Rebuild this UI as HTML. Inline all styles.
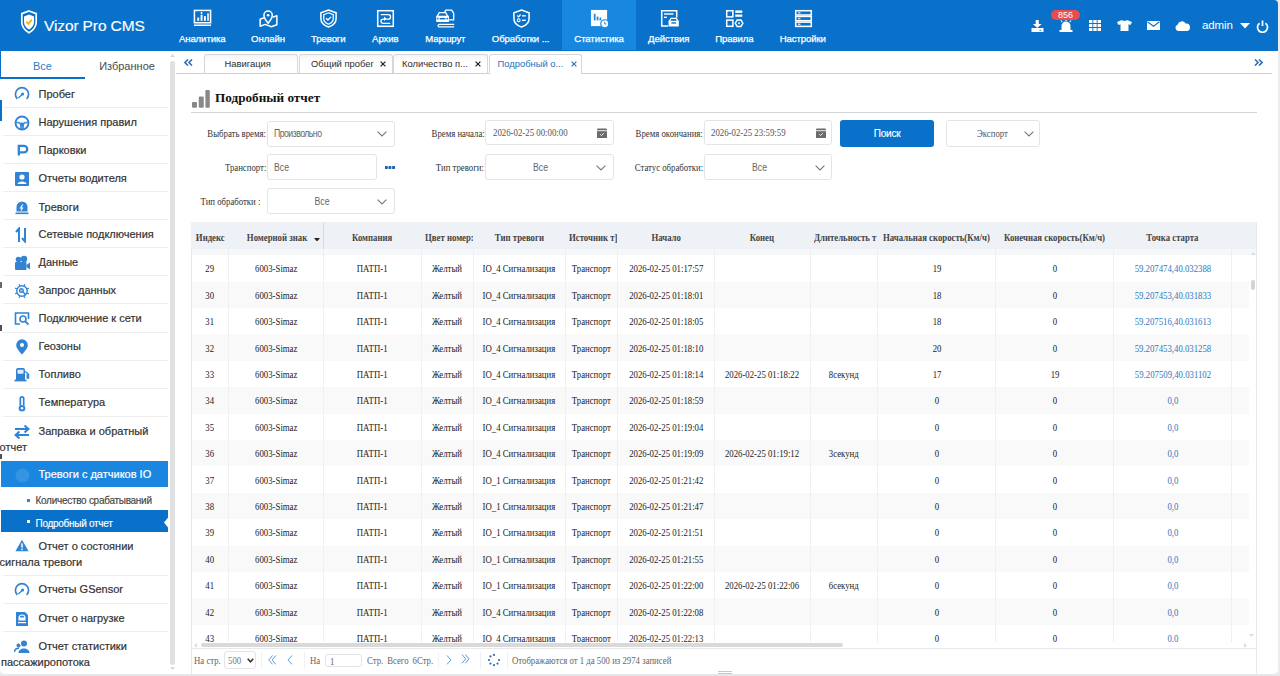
<!DOCTYPE html>
<html><head><meta charset="utf-8">
<style>
*{margin:0;padding:0;box-sizing:border-box}
html,body{width:1280px;height:676px;overflow:hidden;background:#ececec;font-family:"Liberation Sans",sans-serif}
.abs{position:absolute}
#hdr{position:absolute;left:0;top:0;width:1278px;height:51px;z-index:5;background:#0971ca;border-top-right-radius:4px}
.nav{position:absolute;top:0;height:50px;color:#fff;font-size:9.6px;letter-spacing:-0.1px;text-align:center;-webkit-text-stroke:0.25px #fff}
.nav .lbl{position:absolute;left:0;right:0;top:32.5px;line-height:12px;white-space:nowrap}
.nav svg{position:absolute;top:9px;left:50%;margin-left:-9px}
.nav.on{background:#1887e0}
#side{position:absolute;left:0;top:50px;width:169px;height:624px;background:#fff;overflow:hidden;border-bottom-left-radius:5px}
#sscroll{position:absolute;left:169px;top:50px;width:7px;height:624px;background:#fff}
#sscroll .thm{position:absolute;left:1.2px;top:10.5px;width:4.6px;height:604px;background:#dfe0e1;border-radius:3px}
#main{position:absolute;left:176px;top:50px;width:1102px;height:624px;background:#fff;border-bottom-right-radius:5px}
.sep{position:absolute;left:3px;width:165px;height:1px;background:#eeeeee}
.it{position:absolute;left:38.5px;font-size:11px;line-height:16px;color:#333;white-space:nowrap;-webkit-text-stroke:0.2px currentColor}
.it2{position:absolute;left:-0.5px;font-size:11px;line-height:16px;color:#333;white-space:nowrap;-webkit-text-stroke:0.2px currentColor}
.sub{position:absolute;left:35.5px;font-size:10px;line-height:16px;color:#444;white-space:nowrap;letter-spacing:-0.28px;-webkit-text-stroke:0.15px currentColor}
.tab{position:absolute;top:54px;height:19px;border:1px solid #d6d7d9;border-bottom:none;border-radius:3px 3px 0 0;background:linear-gradient(#f4f4f4,#fff 40%)}
.tab span{position:absolute;top:3px;font-size:9.4px;line-height:12px;color:#333;white-space:nowrap;-webkit-text-stroke:0.05px currentColor}
.tab i{position:absolute;top:5.8px;width:6px;height:6px;line-height:0}
.tab.act{height:20px;background:#fff}
.tab.act span{color:#2b78c2}
.lab{position:absolute;font-family:"Liberation Serif",serif;font-size:10px;line-height:14px;color:#333;white-space:nowrap;transform:scaleX(0.875);transform-origin:100% 50%}
.inp{position:absolute;border:1px solid #e3e4e6;border-radius:3px;background:#fff}
.stx{position:absolute;font-size:10px;line-height:14px;color:#666;white-space:nowrap;transform:scaleX(0.87);transform-origin:0 50%}
.stx.c{transform-origin:50% 50%}
.dtx{position:absolute;font-family:"Liberation Serif",serif;font-size:10px;line-height:14px;color:#555;white-space:nowrap;transform:scaleX(0.88);transform-origin:0 50%}
.td{position:absolute;font-family:"Liberation Serif",serif;font-size:10px;line-height:14px;color:#222;text-align:center;white-space:nowrap;transform:scaleX(0.875)}
.td.lnk{color:#2e79be}
.th{position:absolute;font-family:"Liberation Serif",serif;font-weight:bold;font-size:10px;line-height:14px;color:#444;text-align:center;white-space:nowrap;transform:scaleX(0.875)}
.ft{position:absolute;font-family:"Liberation Serif",serif;font-size:10px;line-height:14px;color:#666;white-space:nowrap;transform:scaleX(0.875);transform-origin:0 50%}
.dv{position:absolute;top:651.75px;width:1px;height:16.5px;background:#f0f1f2}
</style></head><body>
<div id="hdr">
 <!-- logo -->
 <svg class="abs" style="left:20px;top:10px" width="18" height="24" viewBox="0 0 18 24">
  <path d="M9 1 L16.2 3.6 V12 C16.2 17.2 12.8 20.6 9 22.8 C5.2 20.6 1.8 17.2 1.8 12 V3.6 Z" fill="none" stroke="#fff" stroke-width="1.7"/>
  <path d="M9 4.6 L14 6.4 V12 C14 15.6 11.6 18.1 9 19.6 C6.4 18.1 4 15.6 4 12 V6.4 Z" fill="#fff"/>
  <path d="M6.2 11.6 L8.3 13.8 L11.9 9.6" fill="none" stroke="#f0b31c" stroke-width="1.8"/>
 </svg>
 <div class="abs" style="left:44px;top:16.7px;font-size:15.5px;color:#fff;line-height:18px;letter-spacing:-0.12px;-webkit-text-stroke:0.15px #fff">Vizor Pro CMS</div>
<div class="nav" style="left:165.2px;width:74px"><svg width="19" height="19" viewBox="0 0 20 20"><rect x="1.5" y="1.5" width="17" height="13" fill="none" stroke="#fff" stroke-width="1.6"/><rect x="4.5" y="9" width="2" height="3.5" fill="#fff"/><rect x="8" y="6" width="2" height="6.5" fill="#fff"/><rect x="11.5" y="7.5" width="2" height="5" fill="#fff"/><rect x="15" y="4.5" width="1.6" height="8" fill="#fff"/><circle cx="9" cy="4.2" r="1" fill="#fff"/><rect x="1" y="16.3" width="18" height="1.6" fill="#fff"/></svg><div class="lbl">Аналитика</div></div>
<div class="nav" style="left:231.0px;width:74px"><svg width="19" height="19" viewBox="0 0 20 20"><path d="M5.2 9.2 L1.2 10.8 V18.2 L6.5 16.2 L13 18.6 L18.8 16.6 V7 L14.6 8.6" fill="none" stroke="#fff" stroke-width="1.6" stroke-linejoin="round"/><path d="M9.6 15 C6.6 11.4 5.2 9.6 5.2 6.6 A4.4 4.4 0 0 1 14 6.6 C14 9.6 12.6 11.4 9.6 15Z" fill="none" stroke="#fff" stroke-width="1.6"/><circle cx="9.6" cy="6.6" r="1.4" fill="#fff"/></svg><div class="lbl">Онлайн</div></div>
<div class="nav" style="left:291.3px;width:74px"><svg width="19" height="19" viewBox="0 0 20 20"><path d="M10 1 L18 4 V10 C18 14.5 14.5 17.5 10 19 C5.5 17.5 2 14.5 2 10 V4Z" fill="none" stroke="#fff" stroke-width="1.6"/><path d="M10 4 L15 6 V10 C15 13 13 15 10 16 C7 15 5 13 5 10 V6Z" fill="none" stroke="#fff" stroke-width="1.3"/><path d="M7.5 9.8 L9.4 11.6 L12.6 8.3" fill="none" stroke="#fff" stroke-width="1.4"/></svg><div class="lbl">Тревоги</div></div>
<div class="nav" style="left:348.3px;width:74px"><svg width="19" height="19" viewBox="0 0 20 20"><rect x="1.8" y="1.8" width="16.4" height="16.4" fill="none" stroke="#fff" stroke-width="1.6"/><path d="M5 6 H13 A2.3 2.3 0 0 1 13 10.6 H7.5 A2.3 2.3 0 0 0 7.5 15.2 H15" fill="none" stroke="#fff" stroke-width="1.4"/><path d="M8.5 8 L11 10.3 L8.5 12.6Z" fill="#fff"/></svg><div class="lbl">Архив</div></div>
<div class="nav" style="left:408.3px;width:74px"><svg width="19" height="19" viewBox="0 0 20 20"><path d="M8.5 4.5 L10.3 1.2 H16.5 L18.6 4.5 V11.5 H13.5" fill="none" stroke="#fff" stroke-width="1.4"/><path d="M0.8 7.2 L3 3.2 H10.6 L12.8 7.2 H13.6 V13.6 H0.2 V7.2Z" fill="#fff"/><path d="M3.8 4.6 H9.8 L11.2 7.2 H2.4Z" fill="#0971ca"/><rect x="3.8" y="9.4" width="6" height="1.6" fill="#0971ca"/><rect x="1" y="9.3" width="1.6" height="1.6" fill="#0971ca"/><rect x="11" y="9.3" width="1.6" height="1.6" fill="#0971ca"/><path d="M3.5 16.3 H19.2 M3.5 16.3 A1.3 1.3 0 0 0 3.5 18.9 H19.2" fill="none" stroke="#fff" stroke-width="1.3"/></svg><div class="lbl">Маршрут</div></div>
<div class="nav" style="left:483.6px;width:74px"><svg width="19" height="19" viewBox="0 0 20 20"><path d="M10 1 L18 4 V10 C18 14.5 14.5 17.5 10 19 C5.5 17.5 2 14.5 2 10 V4Z" fill="none" stroke="#fff" stroke-width="1.6"/><path d="M5.5 6.8 L7 8.3 L9 5.8" fill="none" stroke="#fff" stroke-width="1.3"/><rect x="10.5" y="6.5" width="4" height="1.4" fill="#fff"/><circle cx="7" cy="11.8" r="1.5" fill="none" stroke="#fff" stroke-width="1.2"/><rect x="10.5" y="11.2" width="4" height="1.4" fill="#fff"/></svg><div class="lbl">Обработки ...</div></div>
<div class="nav on" style="left:562.0px;width:74px"><svg width="19" height="19" viewBox="0 0 20 20"><rect x="1" y="1" width="17" height="17" fill="#fff"/><rect x="4" y="5" width="1.8" height="7" fill="#1887e0"/><rect x="7" y="8" width="1.8" height="4" fill="#1887e0"/><rect x="10" y="9" width="1.8" height="3" fill="#1887e0"/><circle cx="15.5" cy="15.5" r="4.2" fill="#fff" stroke="#1887e0" stroke-width="1.2"/><path d="M15.5 13.5 V15.8 H17.3" fill="none" stroke="#1887e0" stroke-width="1"/></svg><div class="lbl">Статистика</div></div>
<div class="nav" style="left:631.7px;width:74px"><svg width="19" height="19" viewBox="0 0 20 20"><path d="M8.5 17.8 H1.8 V1.8 H17.6 V9" fill="none" stroke="#fff" stroke-width="1.6"/><rect x="4.2" y="4.5" width="10" height="1.5" fill="#fff"/><rect x="4.2" y="8" width="3" height="1.5" fill="#fff"/><path d="M9.6 12 L11.2 9.2 H17.6 L19.2 12 H19.8 V18.4 H9 V12Z" fill="#fff"/><path d="M12 10.5 H16.8 L17.8 12.3 H11Z" fill="#0971ca"/><rect x="12" y="14" width="5" height="1.4" fill="#0971ca"/></svg><div class="lbl">Действия</div></div>
<div class="nav" style="left:697.3px;width:74px"><svg width="19" height="19" viewBox="0 0 20 20"><rect x="1.8" y="1.8" width="6.5" height="6.5" fill="none" stroke="#fff" stroke-width="1.6"/><rect x="1.8" y="11.7" width="6.5" height="6.5" fill="none" stroke="#fff" stroke-width="1.6"/><rect x="10.8" y="1.5" width="7.4" height="2.6" fill="#fff"/><rect x="10.8" y="5.8" width="7.4" height="2.4" fill="#fff"/><path d="M12.8 11.6 H16.8 L18.8 15 L16.8 18.4 H12.8 L10.8 15Z" fill="none" stroke="#fff" stroke-width="1.5"/><circle cx="14.8" cy="15" r="1" fill="#fff"/></svg><div class="lbl">Правила</div></div>
<div class="nav" style="left:765.8px;width:74px"><svg width="19" height="19" viewBox="0 0 20 20"><rect x="1.8" y="1.8" width="16.4" height="4.5" fill="none" stroke="#fff" stroke-width="1.6"/><rect x="1.8" y="7.8" width="16.4" height="4.5" fill="none" stroke="#fff" stroke-width="1.6"/><rect x="1.8" y="13.8" width="16.4" height="4.5" fill="none" stroke="#fff" stroke-width="1.6"/><rect x="4.2" y="3.3" width="2.6" height="1.5" fill="#fff" opacity="0.8"/><rect x="4.2" y="9.3" width="2.6" height="1.5" fill="#fff" opacity="0.8"/><rect x="4.2" y="15.3" width="2.6" height="1.5" fill="#fff" opacity="0.8"/></svg><div class="lbl">Настройки</div></div>
 <!-- right toolbar -->
 <svg class="abs" style="left:1030.5px;top:20px" width="13" height="12" viewBox="0 0 13 12"><path d="M4.7 0 H7.8 V4 H10.6 L6.25 8 L1.9 4 H4.7Z" fill="#fff"/><rect x="0.5" y="8" width="12" height="4" fill="#fff"/><rect x="8.6" y="9.8" width="1.3" height="1" fill="#0971ca"/></svg>
 <svg class="abs" style="left:1059px;top:19px" width="14" height="13" viewBox="0 0 14 13"><path d="M2.5 11 V7 A4.5 4.5 0 0 1 11.5 7 V11Z" fill="#fff"/><rect x="0.5" y="11" width="13" height="2" fill="#fff"/><path d="M7 0 V2 M2 1.5 L3.2 3 M12 1.5 L10.8 3" stroke="#fff" stroke-width="1.2"/></svg>
 <div class="abs" style="left:1051px;top:10px;width:29px;height:10px;border-radius:5px;background:#e84c4c;color:#fff;font-size:9px;line-height:10px;text-align:center">856</div>
 <svg class="abs" style="left:1089px;top:20px" width="12" height="11" viewBox="0 0 12 11"><g fill="#fff"><rect x="0" y="0" width="3.4" height="3"/><rect x="4.3" y="0" width="3.4" height="3"/><rect x="8.6" y="0" width="3.4" height="3"/><rect x="0" y="4" width="3.4" height="3"/><rect x="4.3" y="4" width="3.4" height="3"/><rect x="8.6" y="4" width="3.4" height="3"/><rect x="0" y="8" width="3.4" height="3"/><rect x="4.3" y="8" width="3.4" height="3"/><rect x="8.6" y="8" width="3.4" height="3"/></g></svg>
 <svg class="abs" style="left:1117px;top:20px" width="15" height="11" viewBox="0 0 15 11"><path d="M5 0 C6 1.2 9 1.2 10 0 L15 2 L13.5 5 L11.5 4.2 V11 H3.5 V4.2 L1.5 5 L0 2Z" fill="#fff"/></svg>
 <svg class="abs" style="left:1147px;top:21px" width="13" height="9" viewBox="0 0 13 9"><rect x="0" y="0" width="13" height="9" fill="#fff"/><path d="M0.5 0.8 L6.5 5.2 L12.5 0.8" fill="none" stroke="#0971ca" stroke-width="1.1"/></svg>
 <svg class="abs" style="left:1175px;top:20px" width="15" height="11" viewBox="0 0 15 11"><path d="M3.5 11 A3.2 3.2 0 0 1 2.6 4.8 A4.3 4.3 0 0 1 10.6 3.6 A3.7 3.7 0 0 1 11.8 11Z" fill="#fff"/></svg>
 <div class="abs" style="left:1202px;top:17px;font-size:11.5px;line-height:16px;color:#fff;letter-spacing:-0.1px">admin</div>
 <svg class="abs" style="left:1240px;top:23px" width="10" height="6" viewBox="0 0 10 6"><path d="M0 0 H10 L5 5.5Z" fill="#fff"/></svg>
 <svg class="abs" style="left:1256px;top:20px" width="13" height="13" viewBox="0 0 13 13"><path d="M3.6 3.2 A5 5 0 1 0 9.4 3.2" fill="none" stroke="#fff" stroke-width="1.7"/><path d="M6.5 0.5 V6" stroke="#fff" stroke-width="1.7"/></svg>
</div>
<div id="side">
<div class="abs" style="left:0;top:0;width:85px;height:29px;border-left:1.5px solid #0971ca;border-bottom:2px solid #0971ca"></div>
<div class="abs" style="left:0;top:9px;width:85px;text-align:center;font-size:11px;line-height:14px;color:#2f7fc6">Все</div>
<div class="abs" style="left:85px;top:9px;width:84px;text-align:center;font-size:11px;line-height:14px;color:#4a4a4a">Избранное</div>
<div class="abs" style="left:0;top:50px;width:1.5px;height:21px;background:#0971ca"></div>
<div class="sep" style="top:56.7px"></div>
<div class="sep" style="top:84.8px"></div>
<div class="sep" style="top:112.9px"></div>
<div class="sep" style="top:141.0px"></div>
<div class="sep" style="top:169.1px"></div>
<div class="sep" style="top:197.2px"></div>
<div class="sep" style="top:225.3px"></div>
<div class="sep" style="top:253.4px"></div>
<div class="sep" style="top:281.5px"></div>
<div class="sep" style="top:309.6px"></div>
<div class="sep" style="top:337.7px"></div>
<div class="sep" style="top:365.8px"></div>
<div class="sep" style="top:524.8px"></div>
<div class="sep" style="top:553.1px"></div>
<div class="sep" style="top:581.0px"></div>
<svg class="abs" style="left:14px;top:36.4px" width="16" height="16" viewBox="0 0 16 16"><path d="M3.3 12.9 A6.6 6.6 0 1 1 12.7 12.9" fill="none" stroke="#3184d4" stroke-width="1.7"/><path d="M4.3 12 L8.4 8.3" stroke="#3184d4" stroke-width="1.3"/><circle cx="8.6" cy="8" r="1.5" fill="#3184d4"/></svg>
<div class="it" style="top:36.1px">Пробег</div>
<svg class="abs" style="left:14px;top:64.5px" width="16" height="16" viewBox="0 0 16 16"><circle cx="8" cy="8" r="6.5" fill="none" stroke="#3184d4" stroke-width="1.9"/><path d="M2 6.8 H5.5 L6.5 8 H9.5 L10.5 6.8 H14 V8.5 H11 L10 10 V14 H6 V10 L5 8.5 H2Z" fill="#3184d4" opacity="0.85"/><rect x="6.3" y="7.6" width="3.4" height="3.4" fill="#3184d4"/></svg>
<div class="it" style="top:64.2px">Нарушения правил</div>
<svg class="abs" style="left:14px;top:92.6px" width="16" height="16" viewBox="0 0 16 16"><path d="M4.8 12.4 V2.9 H10 A3.25 3.25 0 0 1 10 9.4 H4.8" fill="none" stroke="#3184d4" stroke-width="2.3"/></svg>
<div class="it" style="top:92.3px">Парковки</div>
<svg class="abs" style="left:14px;top:120.7px" width="16" height="16" viewBox="0 0 16 16"><rect x="1" y="1" width="14" height="14" rx="1" fill="#3184d4"/><circle cx="8" cy="6" r="2.6" fill="#fff"/><path d="M3.5 13 C3.5 9.5 12.5 9.5 12.5 13Z" fill="#fff"/></svg>
<div class="it" style="top:120.4px">Отчеты водителя</div>
<svg class="abs" style="left:14px;top:148.8px" width="16" height="16" viewBox="0 0 16 16"><path d="M2.5 12.5 V8 A5.5 5.5 0 0 1 13.5 8 V12.5Z" fill="#3184d4"/><path d="M8.8 5.5 L6.5 9 H8.5 L7 11.5" fill="none" stroke="#fff" stroke-width="1.1"/><rect x="1.5" y="13.5" width="13" height="1.6" fill="#3184d4"/></svg>
<div class="it" style="top:148.5px">Тревоги</div>
<svg class="abs" style="left:14px;top:176.9px" width="16" height="16" viewBox="0 0 16 16"><path d="M5 15 V2 M2 5 L5 1.5 L5 5" fill="none" stroke="#3184d4" stroke-width="2"/><path d="M11 1 V14 M8 11 L11 14.5 L11 11" fill="none" stroke="#3184d4" stroke-width="2"/></svg>
<div class="it" style="top:175.8px">Сетевые подключения</div>
<svg class="abs" style="left:14px;top:205.0px" width="16" height="16" viewBox="0 0 16 16"><circle cx="4.5" cy="4.5" r="2.8" fill="#3184d4"/><circle cx="10" cy="4" r="3.2" fill="#3184d4"/><rect x="1" y="7" width="11.5" height="8" rx="1" fill="#3184d4"/><path d="M12.5 10 L16 7.5 V14.5 L12.5 12Z" fill="#3184d4"/></svg>
<div class="it" style="top:203.9px">Данные</div>
<svg class="abs" style="left:14px;top:233.1px" width="16" height="16" viewBox="0 0 16 16"><circle cx="8" cy="8" r="5.2" fill="none" stroke="#3184d4" stroke-width="1.4"/><path d="M13.17 10.14 L14.84 10.83 M10.14 13.17 L10.83 14.84 M5.86 13.17 L5.17 14.84 M2.83 10.14 L1.16 10.83 M2.83 5.86 L1.16 5.17 M5.86 2.83 L5.17 1.16 M10.14 2.83 L10.83 1.16 M13.17 5.86 L14.84 5.17 " stroke="#3184d4" stroke-width="1.3"/><circle cx="7.4" cy="7.4" r="2.5" fill="#3184d4"/><circle cx="7.4" cy="7.4" r="1.2" fill="#fff" opacity="0.5"/><path d="M9 9 L11.6 11.6" stroke="#3184d4" stroke-width="1.6"/></svg>
<div class="it" style="top:231.8px">Запрос данных</div>
<svg class="abs" style="left:14px;top:261.2px" width="16" height="16" viewBox="0 0 16 16"><path d="M6 13 H1.5 V2 H14.5 V8" fill="none" stroke="#3184d4" stroke-width="1.6"/><circle cx="9" cy="8" r="3" fill="none" stroke="#3184d4" stroke-width="1.6"/><path d="M11 10.2 L14.5 13.5" stroke="#3184d4" stroke-width="1.8"/></svg>
<div class="it" style="top:259.9px">Подключение к сети</div>
<svg class="abs" style="left:14px;top:289.3px" width="16" height="16" viewBox="0 0 16 16"><path d="M8 15.5 C4 11 2.2 8.5 2.2 6 A5.8 5.8 0 0 1 13.8 6 C13.8 8.5 12 11 8 15.5Z" fill="#3184d4"/><circle cx="8" cy="6" r="2" fill="#fff"/></svg>
<div class="it" style="top:287.7px">Геозоны</div>
<svg class="abs" style="left:14px;top:317.4px" width="16" height="16" viewBox="0 0 16 16"><path d="M2 3 A2 2 0 0 1 4 1 H9 A2 2 0 0 1 11 3 V13 H2Z" fill="#3184d4"/><rect x="3.5" y="2.8" width="6" height="4" rx="0.8" fill="#fff" opacity="0.85"/><rect x="0.5" y="12.6" width="12" height="1.8" fill="#3184d4"/><path d="M11 4.5 L13.2 5.8 V11 H14.6 V6.5" fill="none" stroke="#3184d4" stroke-width="1.3"/></svg>
<div class="it" style="top:315.8px">Топливо</div>
<svg class="abs" style="left:14px;top:345.5px" width="16" height="16" viewBox="0 0 16 16"><path d="M6.3 9.6 V2.6 A1.7 1.7 0 0 1 9.7 2.6 V9.6" fill="none" stroke="#3184d4" stroke-width="1.7"/><circle cx="8" cy="12.3" r="3.3" fill="#3184d4"/><circle cx="8" cy="12.3" r="1.2" fill="#fff"/></svg>
<div class="it" style="top:343.9px">Температура</div>
<svg class="abs" style="left:14px;top:374.3px" width="16" height="16" viewBox="0 0 16 16"><path d="M1 5 H14 M10.5 1.5 L14.5 5 L10.5 8.5" fill="none" stroke="#3184d4" stroke-width="2"/><path d="M15 11 H2 M5.5 7.5 L1.5 11 L5.5 14.5" fill="none" stroke="#3184d4" stroke-width="2"/></svg>
<div class="it" style="top:372.5px">Заправка и обратный</div>
<div class="it2" style="top:388.6px">отчет</div>
<svg class="abs" style="left:14px;top:488.2px" width="16" height="16" viewBox="0 0 16 16"><path d="M8 1.8 L14.6 13.2 H1.4Z" fill="#3184d4"/><rect x="7.25" y="5.3" width="1.5" height="4.3" fill="#fff"/><rect x="7.25" y="10.6" width="1.5" height="1.5" fill="#fff"/></svg>
<div class="it" style="top:487.7px">Отчет о состоянии</div>
<div class="it2" style="top:504.0px">сигнала тревоги</div>
<svg class="abs" style="left:14px;top:531.8px" width="16" height="16" viewBox="0 0 16 16"><path d="M3.3 12.9 A6.6 6.6 0 1 1 12.7 12.9" fill="none" stroke="#3184d4" stroke-width="1.7"/><path d="M4.3 12 L8.4 8.3" stroke="#3184d4" stroke-width="1.3"/><circle cx="8.6" cy="8" r="1.5" fill="#3184d4"/></svg>
<div class="it" style="top:531.1px">Отчеты GSensor</div>
<svg class="abs" style="left:14px;top:560.7px" width="16" height="16" viewBox="0 0 16 16"><path d="M2 1 H11 L14 4 V15 H2Z" fill="#3184d4"/><rect x="5.2" y="4" width="5.6" height="4.5" rx="2.8" fill="none" stroke="#fff" stroke-width="1.2"/><rect x="4.5" y="6.5" width="7" height="3" fill="#fff"/><rect x="4" y="11" width="8" height="1.2" fill="#fff"/></svg>
<div class="it" style="top:560.0px">Отчет о нагрузке</div>
<svg class="abs" style="left:14px;top:588.6px" width="16" height="16" viewBox="0 0 16 16"><circle cx="10" cy="4.5" r="3" fill="#3184d4"/><path d="M4.5 14 C4.5 8 15.5 8 15.5 14Z" fill="#3184d4"/><circle cx="4.5" cy="6.5" r="2" fill="#3184d4"/><path d="M0.5 13 C0.5 9.5 4 9 5 9.5" fill="none" stroke="#3184d4" stroke-width="1.4"/></svg>
<div class="it" style="top:587.8px">Отчет статистики</div>
<div class="it2" style="top:604.4px;left:1px">пассажиропотока</div>
<div class="abs" style="left:1px;top:411px;width:167px;height:26px;background:#1a86df"></div>
<svg class="abs" style="left:15px;top:417.5px" width="15" height="15" viewBox="0 0 16 16"><circle cx="8" cy="8" r="7.5" fill="#fff" opacity="0.12"/></svg>
<div class="it" style="top:415.7px;color:#fff">Тревоги с датчиков IO</div>
<div class="abs" style="left:27px;top:448.5px;width:3px;height:3px;background:#3184d4"></div>
<div class="sub" style="top:443.4px">Количество срабатываний</div>
<div class="abs" style="left:1px;top:460px;width:167px;height:22px;background:#0971ca"></div>
<svg class="abs" style="left:163.5px;top:466.5px" width="4.5" height="11" viewBox="0 0 4.5 11"><path d="M4.5 0 L0 5.5 L4.5 11Z" fill="#fff"/></svg>
<div class="abs" style="left:27px;top:469.5px;width:3px;height:3px;background:#fff"></div>
<div class="sub" style="top:465.5px;color:#fff">Подробный отчет</div>
</div>
<div class="abs" style="left:0;top:282px;width:2px;height:5.5px;background:#444;opacity:0.8"></div>
<div class="abs" style="left:0;top:324.5px;width:2px;height:6px;background:#333;opacity:0.85"></div>
<div class="abs" style="left:0;top:454px;width:1.5px;height:4.5px;background:#333;opacity:0.85"></div>
<div id="sscroll"><svg style="position:absolute;left:1px;top:4px" width="5" height="3" viewBox="0 0 5 3"><path d="M0 3 L2.5 0 L5 3Z" fill="#d8d8d8"/></svg><div class="thm"></div><svg style="position:absolute;left:1px;top:617px" width="5" height="3" viewBox="0 0 5 3"><path d="M0 0 L2.5 3 L5 0Z" fill="#d8d8d8"/></svg></div>

<div id="main"></div>
<!-- tabs bar -->
<svg class="abs" style="left:184px;top:59px" width="9" height="7" viewBox="0 0 9 7"><path d="M4 0.5 L1 3.5 L4 6.5 M8 0.5 L5 3.5 L8 6.5" fill="none" stroke="#2a6fb8" stroke-width="1.6"/></svg>
<svg class="abs" style="left:1254px;top:59px" width="9" height="7" viewBox="0 0 9 7"><path d="M1 0.5 L4 3.5 L1 6.5 M5 0.5 L8 3.5 L5 6.5" fill="none" stroke="#2a6fb8" stroke-width="1.6"/></svg>
<div class="abs" style="left:176px;top:72.5px;width:1096px;height:1px;background:#cfd1d4"></div>
<div class="tab" style="left:204px;width:94px"><span style="left:19.5px">Навигация</span></div>
<div class="tab" style="left:299px;width:94px"><span style="left:11px">Общий пробег</span><i style="left:80px"><svg width="6" height="6" viewBox="0 0 6 6"><path d="M0.6 0.6 L5.4 5.4 M5.4 0.6 L0.6 5.4" stroke="#222" stroke-width="1.2"/></svg></i></div>
<div class="tab" style="left:392.5px;width:95px"><span style="left:8.5px">Количество п...</span><i style="left:81.5px"><svg width="6" height="6" viewBox="0 0 6 6"><path d="M0.6 0.6 L5.4 5.4 M5.4 0.6 L0.6 5.4" stroke="#222" stroke-width="1.2"/></svg></i></div>
<div class="tab act" style="left:489px;width:92.5px"><span style="left:7.5px">Подробный о...</span><i style="left:80.5px"><svg width="6" height="6" viewBox="0 0 6 6"><path d="M0.6 0.6 L5.4 5.4 M5.4 0.6 L0.6 5.4" stroke="#2b78c2" stroke-width="1.2"/></svg></i></div>

<!-- form -->
<div class="lab" style="right:1014.4px;top:127px">Выбрать время:</div>
<div class="inp" style="left:266.5px;top:120.5px;width:128px;height:26px"></div>
<div class="stx" style="left:274.2px;top:127px;letter-spacing:-0.6px">Произвольно</div>
<svg class="abs" style="left:377px;top:131px" width="10" height="6" viewBox="0 0 10 6"><path d="M0.6 0.6 L5 5 L9.4 0.6" fill="none" stroke="#777" stroke-width="1.1"/></svg>
<div class="lab" style="right:795.8px;top:127px">Время начала:</div>
<div class="inp" style="left:485px;top:120.3px;width:128.6px;height:24.7px"></div>
<div class="dtx" style="left:492.5px;top:126px">2026-02-25 00:00:00</div>
<svg class="abs" style="left:597px;top:127.5px" width="10" height="10.5" viewBox="0 0 10 10.5"><rect x="0" y="0.5" width="10" height="10" rx="1" fill="#6b6b6b"/><rect x="0" y="2.3" width="10" height="0.9" fill="#fff"/><path d="M3.2 6.3 L4.5 7.5 L6.8 5.2" fill="none" stroke="#fff" stroke-width="0.9"/></svg>
<div class="lab" style="right:577px;top:127px">Время окончания:</div>
<div class="inp" style="left:703.5px;top:120.3px;width:128.9px;height:24.7px"></div>
<div class="dtx" style="left:711px;top:126px">2026-02-25 23:59:59</div>
<svg class="abs" style="left:816px;top:127.5px" width="10" height="10.5" viewBox="0 0 10 10.5"><rect x="0" y="0.5" width="10" height="10" rx="1" fill="#6b6b6b"/><rect x="0" y="2.3" width="10" height="0.9" fill="#fff"/><path d="M3.2 6.3 L4.5 7.5 L6.8 5.2" fill="none" stroke="#fff" stroke-width="0.9"/></svg>
<div class="abs" style="left:840px;top:120.3px;width:94px;height:26.3px;background:#0971ca;border-radius:3px;color:#fff;font-size:10px;line-height:28px;text-align:center;letter-spacing:-0.2px;-webkit-text-stroke:0.15px #fff">Поиск</div>
<div class="inp" style="left:946.3px;top:120.3px;width:93.3px;height:26.3px"></div>
<div class="lab" style="left:977.4px;top:127px;color:#555;transform-origin:0 50%">Экспорт</div>
<svg class="abs" style="left:1024px;top:131px" width="10" height="6" viewBox="0 0 10 6"><path d="M0.6 0.6 L5 5 L9.4 0.6" fill="none" stroke="#777" stroke-width="1.1"/></svg>
<div class="lab" style="right:1014px;top:161px">Транспорт:</div>
<div class="inp" style="left:266.5px;top:154.3px;width:110.5px;height:26px"></div>
<div class="stx" style="left:273.8px;top:161px">Все</div>
<div class="abs" style="left:385px;top:166px;width:10px;height:3px;background:radial-gradient(circle at 1.5px 1.5px,#1d62ad 1.45px,transparent 1.7px) 0 0/3.6px 3px repeat-x"></div>
<div class="lab" style="right:796px;top:161px">Тип тревоги:</div>
<div class="inp" style="left:485px;top:154.3px;width:128.6px;height:26px"></div>
<div class="stx c" style="left:485px;width:111px;text-align:center;top:161px">Все</div>
<svg class="abs" style="left:596px;top:164.5px" width="10" height="6" viewBox="0 0 10 6"><path d="M0.6 0.6 L5 5 L9.4 0.6" fill="none" stroke="#777" stroke-width="1.1"/></svg>
<div class="lab" style="right:577px;top:161px">Статус обработки:</div>
<div class="inp" style="left:703.5px;top:154.3px;width:128.9px;height:26px"></div>
<div class="stx c" style="left:703.5px;width:111px;text-align:center;top:161px">Все</div>
<svg class="abs" style="left:815px;top:164.5px" width="10" height="6" viewBox="0 0 10 6"><path d="M0.6 0.6 L5 5 L9.4 0.6" fill="none" stroke="#777" stroke-width="1.1"/></svg>
<div class="lab" style="right:1020px;top:195px">Тип обработки :</div>
<div class="inp" style="left:266.5px;top:188.2px;width:128px;height:25.8px"></div>
<div class="stx c" style="left:266.5px;width:110px;text-align:center;top:195px">Все</div>
<svg class="abs" style="left:377px;top:198.5px" width="10" height="6" viewBox="0 0 10 6"><path d="M0.6 0.6 L5 5 L9.4 0.6" fill="none" stroke="#777" stroke-width="1.1"/></svg>

<!-- table -->
<div class="abs" style="left:191.25px;top:222px;width:1065.75px;height:27px;background:#eef1f5"></div>
<div class="abs" style="left:191.25px;top:249px;width:1065.75px;height:6.2px;background:#f6f7f9"></div>
<div class="abs" style="left:191.25px;top:255.3px;width:1065.75px;height:386.4px;overflow:hidden"><div class="abs" style="left:0;top:26.40px;width:1057.75px;height:26.4px;background:#f9f9f9"></div>
<div class="abs" style="left:0;top:79.20px;width:1057.75px;height:26.4px;background:#f9f9f9"></div>
<div class="abs" style="left:0;top:132.00px;width:1057.75px;height:26.4px;background:#f9f9f9"></div>
<div class="abs" style="left:0;top:184.80px;width:1057.75px;height:26.4px;background:#f9f9f9"></div>
<div class="abs" style="left:0;top:237.60px;width:1057.75px;height:26.4px;background:#f9f9f9"></div>
<div class="abs" style="left:0;top:290.40px;width:1057.75px;height:26.4px;background:#f9f9f9"></div>
<div class="abs" style="left:0;top:343.20px;width:1057.75px;height:26.4px;background:#f9f9f9"></div>
<div class="abs" style="left:36.75px;top:0;width:1px;height:400px;background:#f0f0f0"></div>
<div class="abs" style="left:131.25px;top:0;width:1px;height:400px;background:#f0f0f0"></div>
<div class="abs" style="left:229.50px;top:0;width:1px;height:400px;background:#f0f0f0"></div>
<div class="abs" style="left:281.50px;top:0;width:1px;height:400px;background:#f0f0f0"></div>
<div class="abs" style="left:373.25px;top:0;width:1px;height:400px;background:#f0f0f0"></div>
<div class="abs" style="left:425.75px;top:0;width:1px;height:400px;background:#f0f0f0"></div>
<div class="abs" style="left:522.25px;top:0;width:1px;height:400px;background:#f0f0f0"></div>
<div class="abs" style="left:618.25px;top:0;width:1px;height:400px;background:#f0f0f0"></div>
<div class="abs" style="left:685.75px;top:0;width:1px;height:400px;background:#f0f0f0"></div>
<div class="abs" style="left:803.75px;top:0;width:1px;height:400px;background:#f0f0f0"></div>
<div class="abs" style="left:921.85px;top:0;width:1px;height:400px;background:#f0f0f0"></div>
<div class="abs" style="left:1039.75px;top:0;width:1px;height:400px;background:#f0f0f0"></div>
<div class="td" style="left:0.00px;top:7.10px;width:37.25px">29</div>
<div class="td" style="left:37.25px;top:7.10px;width:94.50px">6003-Simaz</div>
<div class="td" style="left:131.75px;top:7.10px;width:98.25px">ПАТП-1</div>
<div class="td" style="left:230.00px;top:7.10px;width:52.00px">Желтый</div>
<div class="td" style="left:282.00px;top:7.10px;width:91.75px">IO_4 Сигнализация</div>
<div class="td" style="left:373.75px;top:7.10px;width:52.50px">Транспорт</div>
<div class="td" style="left:426.25px;top:7.10px;width:96.50px">2026-02-25 01:17:57</div>
<div class="td" style="left:686.25px;top:7.10px;width:118.00px">19</div>
<div class="td" style="left:804.25px;top:7.10px;width:118.10px">0</div>
<div class="td lnk" style="left:922.35px;top:7.10px;width:117.90px">59.207474,40.032388</div>
<div class="td" style="left:0.00px;top:33.50px;width:37.25px">30</div>
<div class="td" style="left:37.25px;top:33.50px;width:94.50px">6003-Simaz</div>
<div class="td" style="left:131.75px;top:33.50px;width:98.25px">ПАТП-1</div>
<div class="td" style="left:230.00px;top:33.50px;width:52.00px">Желтый</div>
<div class="td" style="left:282.00px;top:33.50px;width:91.75px">IO_4 Сигнализация</div>
<div class="td" style="left:373.75px;top:33.50px;width:52.50px">Транспорт</div>
<div class="td" style="left:426.25px;top:33.50px;width:96.50px">2026-02-25 01:18:01</div>
<div class="td" style="left:686.25px;top:33.50px;width:118.00px">18</div>
<div class="td" style="left:804.25px;top:33.50px;width:118.10px">0</div>
<div class="td lnk" style="left:922.35px;top:33.50px;width:117.90px">59.207453,40.031833</div>
<div class="td" style="left:0.00px;top:59.90px;width:37.25px">31</div>
<div class="td" style="left:37.25px;top:59.90px;width:94.50px">6003-Simaz</div>
<div class="td" style="left:131.75px;top:59.90px;width:98.25px">ПАТП-1</div>
<div class="td" style="left:230.00px;top:59.90px;width:52.00px">Желтый</div>
<div class="td" style="left:282.00px;top:59.90px;width:91.75px">IO_4 Сигнализация</div>
<div class="td" style="left:373.75px;top:59.90px;width:52.50px">Транспорт</div>
<div class="td" style="left:426.25px;top:59.90px;width:96.50px">2026-02-25 01:18:05</div>
<div class="td" style="left:686.25px;top:59.90px;width:118.00px">18</div>
<div class="td" style="left:804.25px;top:59.90px;width:118.10px">0</div>
<div class="td lnk" style="left:922.35px;top:59.90px;width:117.90px">59.207516,40.031613</div>
<div class="td" style="left:0.00px;top:86.30px;width:37.25px">32</div>
<div class="td" style="left:37.25px;top:86.30px;width:94.50px">6003-Simaz</div>
<div class="td" style="left:131.75px;top:86.30px;width:98.25px">ПАТП-1</div>
<div class="td" style="left:230.00px;top:86.30px;width:52.00px">Желтый</div>
<div class="td" style="left:282.00px;top:86.30px;width:91.75px">IO_4 Сигнализация</div>
<div class="td" style="left:373.75px;top:86.30px;width:52.50px">Транспорт</div>
<div class="td" style="left:426.25px;top:86.30px;width:96.50px">2026-02-25 01:18:10</div>
<div class="td" style="left:686.25px;top:86.30px;width:118.00px">20</div>
<div class="td" style="left:804.25px;top:86.30px;width:118.10px">0</div>
<div class="td lnk" style="left:922.35px;top:86.30px;width:117.90px">59.207453,40.031258</div>
<div class="td" style="left:0.00px;top:112.70px;width:37.25px">33</div>
<div class="td" style="left:37.25px;top:112.70px;width:94.50px">6003-Simaz</div>
<div class="td" style="left:131.75px;top:112.70px;width:98.25px">ПАТП-1</div>
<div class="td" style="left:230.00px;top:112.70px;width:52.00px">Желтый</div>
<div class="td" style="left:282.00px;top:112.70px;width:91.75px">IO_4 Сигнализация</div>
<div class="td" style="left:373.75px;top:112.70px;width:52.50px">Транспорт</div>
<div class="td" style="left:426.25px;top:112.70px;width:96.50px">2026-02-25 01:18:14</div>
<div class="td" style="left:522.75px;top:112.70px;width:96.00px">2026-02-25 01:18:22</div>
<div class="td" style="left:618.75px;top:112.70px;width:67.50px">8секунд</div>
<div class="td" style="left:686.25px;top:112.70px;width:118.00px">17</div>
<div class="td" style="left:804.25px;top:112.70px;width:118.10px">19</div>
<div class="td lnk" style="left:922.35px;top:112.70px;width:117.90px">59.207509,40.031102</div>
<div class="td" style="left:0.00px;top:139.10px;width:37.25px">34</div>
<div class="td" style="left:37.25px;top:139.10px;width:94.50px">6003-Simaz</div>
<div class="td" style="left:131.75px;top:139.10px;width:98.25px">ПАТП-1</div>
<div class="td" style="left:230.00px;top:139.10px;width:52.00px">Желтый</div>
<div class="td" style="left:282.00px;top:139.10px;width:91.75px">IO_4 Сигнализация</div>
<div class="td" style="left:373.75px;top:139.10px;width:52.50px">Транспорт</div>
<div class="td" style="left:426.25px;top:139.10px;width:96.50px">2026-02-25 01:18:59</div>
<div class="td" style="left:686.25px;top:139.10px;width:118.00px">0</div>
<div class="td" style="left:804.25px;top:139.10px;width:118.10px">0</div>
<div class="td lnk" style="left:922.35px;top:139.10px;width:117.90px">0,0</div>
<div class="td" style="left:0.00px;top:165.50px;width:37.25px">35</div>
<div class="td" style="left:37.25px;top:165.50px;width:94.50px">6003-Simaz</div>
<div class="td" style="left:131.75px;top:165.50px;width:98.25px">ПАТП-1</div>
<div class="td" style="left:230.00px;top:165.50px;width:52.00px">Желтый</div>
<div class="td" style="left:282.00px;top:165.50px;width:91.75px">IO_4 Сигнализация</div>
<div class="td" style="left:373.75px;top:165.50px;width:52.50px">Транспорт</div>
<div class="td" style="left:426.25px;top:165.50px;width:96.50px">2026-02-25 01:19:04</div>
<div class="td" style="left:686.25px;top:165.50px;width:118.00px">0</div>
<div class="td" style="left:804.25px;top:165.50px;width:118.10px">0</div>
<div class="td lnk" style="left:922.35px;top:165.50px;width:117.90px">0,0</div>
<div class="td" style="left:0.00px;top:191.90px;width:37.25px">36</div>
<div class="td" style="left:37.25px;top:191.90px;width:94.50px">6003-Simaz</div>
<div class="td" style="left:131.75px;top:191.90px;width:98.25px">ПАТП-1</div>
<div class="td" style="left:230.00px;top:191.90px;width:52.00px">Желтый</div>
<div class="td" style="left:282.00px;top:191.90px;width:91.75px">IO_4 Сигнализация</div>
<div class="td" style="left:373.75px;top:191.90px;width:52.50px">Транспорт</div>
<div class="td" style="left:426.25px;top:191.90px;width:96.50px">2026-02-25 01:19:09</div>
<div class="td" style="left:522.75px;top:191.90px;width:96.00px">2026-02-25 01:19:12</div>
<div class="td" style="left:618.75px;top:191.90px;width:67.50px">3секунд</div>
<div class="td" style="left:686.25px;top:191.90px;width:118.00px">0</div>
<div class="td" style="left:804.25px;top:191.90px;width:118.10px">0</div>
<div class="td lnk" style="left:922.35px;top:191.90px;width:117.90px">0,0</div>
<div class="td" style="left:0.00px;top:218.30px;width:37.25px">37</div>
<div class="td" style="left:37.25px;top:218.30px;width:94.50px">6003-Simaz</div>
<div class="td" style="left:131.75px;top:218.30px;width:98.25px">ПАТП-1</div>
<div class="td" style="left:230.00px;top:218.30px;width:52.00px">Желтый</div>
<div class="td" style="left:282.00px;top:218.30px;width:91.75px">IO_1 Сигнализация</div>
<div class="td" style="left:373.75px;top:218.30px;width:52.50px">Транспорт</div>
<div class="td" style="left:426.25px;top:218.30px;width:96.50px">2026-02-25 01:21:42</div>
<div class="td" style="left:686.25px;top:218.30px;width:118.00px">0</div>
<div class="td" style="left:804.25px;top:218.30px;width:118.10px">0</div>
<div class="td lnk" style="left:922.35px;top:218.30px;width:117.90px">0,0</div>
<div class="td" style="left:0.00px;top:244.70px;width:37.25px">38</div>
<div class="td" style="left:37.25px;top:244.70px;width:94.50px">6003-Simaz</div>
<div class="td" style="left:131.75px;top:244.70px;width:98.25px">ПАТП-1</div>
<div class="td" style="left:230.00px;top:244.70px;width:52.00px">Желтый</div>
<div class="td" style="left:282.00px;top:244.70px;width:91.75px">IO_1 Сигнализация</div>
<div class="td" style="left:373.75px;top:244.70px;width:52.50px">Транспорт</div>
<div class="td" style="left:426.25px;top:244.70px;width:96.50px">2026-02-25 01:21:47</div>
<div class="td" style="left:686.25px;top:244.70px;width:118.00px">0</div>
<div class="td" style="left:804.25px;top:244.70px;width:118.10px">0</div>
<div class="td lnk" style="left:922.35px;top:244.70px;width:117.90px">0,0</div>
<div class="td" style="left:0.00px;top:271.10px;width:37.25px">39</div>
<div class="td" style="left:37.25px;top:271.10px;width:94.50px">6003-Simaz</div>
<div class="td" style="left:131.75px;top:271.10px;width:98.25px">ПАТП-1</div>
<div class="td" style="left:230.00px;top:271.10px;width:52.00px">Желтый</div>
<div class="td" style="left:282.00px;top:271.10px;width:91.75px">IO_1 Сигнализация</div>
<div class="td" style="left:373.75px;top:271.10px;width:52.50px">Транспорт</div>
<div class="td" style="left:426.25px;top:271.10px;width:96.50px">2026-02-25 01:21:51</div>
<div class="td" style="left:686.25px;top:271.10px;width:118.00px">0</div>
<div class="td" style="left:804.25px;top:271.10px;width:118.10px">0</div>
<div class="td lnk" style="left:922.35px;top:271.10px;width:117.90px">0,0</div>
<div class="td" style="left:0.00px;top:297.50px;width:37.25px">40</div>
<div class="td" style="left:37.25px;top:297.50px;width:94.50px">6003-Simaz</div>
<div class="td" style="left:131.75px;top:297.50px;width:98.25px">ПАТП-1</div>
<div class="td" style="left:230.00px;top:297.50px;width:52.00px">Желтый</div>
<div class="td" style="left:282.00px;top:297.50px;width:91.75px">IO_1 Сигнализация</div>
<div class="td" style="left:373.75px;top:297.50px;width:52.50px">Транспорт</div>
<div class="td" style="left:426.25px;top:297.50px;width:96.50px">2026-02-25 01:21:55</div>
<div class="td" style="left:686.25px;top:297.50px;width:118.00px">0</div>
<div class="td" style="left:804.25px;top:297.50px;width:118.10px">0</div>
<div class="td lnk" style="left:922.35px;top:297.50px;width:117.90px">0,0</div>
<div class="td" style="left:0.00px;top:323.90px;width:37.25px">41</div>
<div class="td" style="left:37.25px;top:323.90px;width:94.50px">6003-Simaz</div>
<div class="td" style="left:131.75px;top:323.90px;width:98.25px">ПАТП-1</div>
<div class="td" style="left:230.00px;top:323.90px;width:52.00px">Желтый</div>
<div class="td" style="left:282.00px;top:323.90px;width:91.75px">IO_1 Сигнализация</div>
<div class="td" style="left:373.75px;top:323.90px;width:52.50px">Транспорт</div>
<div class="td" style="left:426.25px;top:323.90px;width:96.50px">2026-02-25 01:22:00</div>
<div class="td" style="left:522.75px;top:323.90px;width:96.00px">2026-02-25 01:22:06</div>
<div class="td" style="left:618.75px;top:323.90px;width:67.50px">6секунд</div>
<div class="td" style="left:686.25px;top:323.90px;width:118.00px">0</div>
<div class="td" style="left:804.25px;top:323.90px;width:118.10px">0</div>
<div class="td lnk" style="left:922.35px;top:323.90px;width:117.90px">0,0</div>
<div class="td" style="left:0.00px;top:350.30px;width:37.25px">42</div>
<div class="td" style="left:37.25px;top:350.30px;width:94.50px">6003-Simaz</div>
<div class="td" style="left:131.75px;top:350.30px;width:98.25px">ПАТП-1</div>
<div class="td" style="left:230.00px;top:350.30px;width:52.00px">Желтый</div>
<div class="td" style="left:282.00px;top:350.30px;width:91.75px">IO_4 Сигнализация</div>
<div class="td" style="left:373.75px;top:350.30px;width:52.50px">Транспорт</div>
<div class="td" style="left:426.25px;top:350.30px;width:96.50px">2026-02-25 01:22:08</div>
<div class="td" style="left:686.25px;top:350.30px;width:118.00px">0</div>
<div class="td" style="left:804.25px;top:350.30px;width:118.10px">0</div>
<div class="td lnk" style="left:922.35px;top:350.30px;width:117.90px">0,0</div>
<div class="td" style="left:0.00px;top:376.70px;width:37.25px">43</div>
<div class="td" style="left:37.25px;top:376.70px;width:94.50px">6003-Simaz</div>
<div class="td" style="left:131.75px;top:376.70px;width:98.25px">ПАТП-1</div>
<div class="td" style="left:230.00px;top:376.70px;width:52.00px">Желтый</div>
<div class="td" style="left:282.00px;top:376.70px;width:91.75px">IO_4 Сигнализация</div>
<div class="td" style="left:373.75px;top:376.70px;width:52.50px">Транспорт</div>
<div class="td" style="left:426.25px;top:376.70px;width:96.50px">2026-02-25 01:22:13</div>
<div class="td" style="left:686.25px;top:376.70px;width:118.00px">0</div>
<div class="td" style="left:804.25px;top:376.70px;width:118.10px">0</div>
<div class="td lnk" style="left:922.35px;top:376.70px;width:117.90px">0,0</div></div>
<div class="th" style="left:178.59px;top:230.5px;width:62.57px">Индекс</div>
<div class="th" style="left:212.75px;top:230.5px;width:128.00px">Номерной знак</div>
<div class="th" style="left:305.98px;top:230.5px;width:132.29px">Компания</div>
<div class="th" style="left:425.25px;top:230.5px;width:54.86px;text-align:left;overflow:hidden;transform-origin:0 50%">Цвет номер:</div>
<div class="th" style="left:456.70px;top:230.5px;width:124.86px">Тип тревоги</div>
<div class="th" style="left:569.00px;top:230.5px;width:55.43px;text-align:left;overflow:hidden;transform-origin:0 50%">Источник т]</div>
<div class="th" style="left:600.61px;top:230.5px;width:130.29px">Начало</div>
<div class="th" style="left:697.14px;top:230.5px;width:129.71px">Конец</div>
<div class="th" style="left:814.00px;top:230.5px;width:72.57px;text-align:left;overflow:hidden;transform-origin:0 50%">Длительность т</div>
<div class="th" style="left:859.07px;top:230.5px;width:154.86px">Начальная скорость(Км/ч)</div>
<div class="th" style="left:977.06px;top:230.5px;width:154.97px">Конечная скорость(Км/ч)</div>
<div class="th" style="left:1095.18px;top:230.5px;width:154.74px">Точка старта</div>
<svg class="abs" style="left:313.8px;top:237.5px" width="6" height="3.5" viewBox="0 0 6 3.5"><path d="M0 0 H6 L3 3.5Z" fill="#222"/></svg>
<div class="abs" style="left:322.5px;top:222px;width:1.2px;height:34px;background:#d9dce0"></div>
<div class="abs" style="left:1251.3px;top:279.5px;width:3.4px;height:10px;border-radius:2px;background:#d4d4d4"></div>
<svg class="abs" style="left:1250.5px;top:252px" width="5" height="3" viewBox="0 0 5 3"><path d="M0 3 L2.5 0 L5 3Z" fill="#ddd"/></svg>
<svg class="abs" style="left:1248.5px;top:634px" width="5" height="3" viewBox="0 0 5 3"><path d="M0 0 L2.5 3 L5 0Z" fill="#ddd"/></svg>
<div class="abs" style="left:191.25px;top:641.7px;width:1065.75px;height:6px;background:#fff"></div>
<div class="abs" style="left:200.5px;top:642.5px;width:642.5px;height:4.5px;border-radius:2.5px;background:#d9d9d9"></div>
<svg class="abs" style="left:194px;top:642.5px" width="3" height="5" viewBox="0 0 3 5"><path d="M3 0 L0 2.5 L3 5Z" fill="#ddd"/></svg>
<svg class="abs" style="left:1244px;top:642.5px" width="3" height="5" viewBox="0 0 3 5"><path d="M0 0 L3 2.5 L0 5Z" fill="#ddd"/></svg>
<div class="abs" style="left:191.25px;top:648px;width:1065.75px;height:1px;background:#e8e9eb"></div>

<!-- footer -->
<div class="abs" style="left:228.00px;top:249px;width:1px;height:6.2px;background:#f0f0f0"></div><div class="abs" style="left:322.50px;top:249px;width:1px;height:6.2px;background:#f0f0f0"></div><div class="abs" style="left:420.75px;top:249px;width:1px;height:6.2px;background:#f0f0f0"></div><div class="abs" style="left:472.75px;top:249px;width:1px;height:6.2px;background:#f0f0f0"></div><div class="abs" style="left:564.50px;top:249px;width:1px;height:6.2px;background:#f0f0f0"></div><div class="abs" style="left:617.00px;top:249px;width:1px;height:6.2px;background:#f0f0f0"></div><div class="abs" style="left:713.50px;top:249px;width:1px;height:6.2px;background:#f0f0f0"></div><div class="abs" style="left:809.50px;top:249px;width:1px;height:6.2px;background:#f0f0f0"></div><div class="abs" style="left:877.00px;top:249px;width:1px;height:6.2px;background:#f0f0f0"></div><div class="abs" style="left:995.00px;top:249px;width:1px;height:6.2px;background:#f0f0f0"></div><div class="abs" style="left:1113.10px;top:249px;width:1px;height:6.2px;background:#f0f0f0"></div><div class="abs" style="left:1231.00px;top:249px;width:1px;height:6.2px;background:#f0f0f0"></div>

<div class="abs" style="left:191px;top:249px;width:1px;height:425px;background:#e6e7e9"></div>

<div class="abs" style="left:1256px;top:222px;width:1px;height:452px;background:#e8e9eb"></div>
<div class="ft" style="left:194px;top:654.0px">На стр.</div>
<div class="inp" style="left:223.7px;top:651.3px;width:32.6px;height:17.7px;border-radius:3px"></div>
<div class="ft" style="left:227.5px;top:654.0px;color:#777">500</div>
<svg class="abs" style="left:247px;top:658px" width="7" height="5" viewBox="0 0 7 5"><path d="M0.7 0.7 L3.5 3.8 L6.3 0.7" fill="none" stroke="#333" stroke-width="1.5"/></svg>
<div class="dv" style="left:261px"></div>
<svg class="abs" style="left:268px;top:654.5px" width="9" height="10" viewBox="0 0 9 10"><path d="M4.5 0.5 L0.8 4.9 L4.5 9.3 M7.8 0.5 L4.1 4.9 L7.8 9.3" fill="none" stroke="#4a8fd6" stroke-width="0.9"/></svg>
<svg class="abs" style="left:286.5px;top:654.5px" width="6" height="10" viewBox="0 0 6 10"><path d="M5 0.5 L1 4.9 L5 9.3" fill="none" stroke="#4a8fd6" stroke-width="0.9"/></svg>
<div class="dv" style="left:304px"></div>
<div class="ft" style="left:309.6px;top:653.5px">На</div>
<div class="inp" style="left:325px;top:653.6px;width:37px;height:13.7px;border-radius:3px"></div>
<div class="ft" style="left:329.5px;top:654.5px">1</div>
<div class="ft" style="left:366.6px;top:653.5px;word-spacing:2px">Стр.  Всего 6Стр.</div>
<div class="dv" style="left:437.5px"></div>
<svg class="abs" style="left:445.5px;top:654.5px" width="6" height="10" viewBox="0 0 6 10"><path d="M1 0.5 L5 4.9 L1 9.3" fill="none" stroke="#4a8fd6" stroke-width="0.9"/></svg>
<svg class="abs" style="left:461px;top:654px" width="9" height="10" viewBox="0 0 9 10"><path d="M1 0.5 L4.7 4.9 L1 9.3 M4.3 0.5 L8 4.9 L4.3 9.3" fill="none" stroke="#4a8fd6" stroke-width="0.9"/></svg>
<div class="dv" style="left:480px"></div>
<svg class="abs" style="left:488px;top:653.75px" width="12" height="12" viewBox="0 0 12 12"><g fill="#2e6fb4"><circle cx="11.00" cy="6.00" r="1.1"/><circle cx="9.54" cy="9.54" r="1.1"/><circle cx="6.00" cy="11.00" r="1.1"/><circle cx="2.46" cy="9.54" r="1.1"/><circle cx="1.00" cy="6.00" r="1.1"/><circle cx="2.46" cy="2.46" r="1.1"/><circle cx="6.00" cy="1.00" r="1.1"/></g></svg>
<div class="dv" style="left:506.5px"></div>
<div class="ft" style="left:512px;top:654.0px">Отображаются от 1 да 500 из 2974 записей</div>
<div class="abs" style="left:717.5px;top:671px;width:14px;height:1.3px;background:#c8c8c8"></div>
<div class="abs" style="left:717.5px;top:673px;width:14px;height:1.3px;background:#c8c8c8"></div>
<!-- bottom strip -->
<div class="abs" style="left:0;top:674px;width:1280px;height:2px;background:#e6e7e9"></div>

<!-- title -->
<svg class="abs" style="left:192px;top:90px" width="18" height="18" viewBox="0 0 18 18"><rect x="0" y="11.9" width="5" height="5.85" rx="1.2" fill="#888"/><rect x="6.75" y="6.6" width="5" height="11.15" rx="1.2" fill="#888"/><rect x="13.4" y="0" width="4.4" height="17.75" rx="1.2" fill="#888"/></svg>
<div class="abs" style="left:215px;top:89.7px;font-family:'Liberation Serif',serif;font-weight:bold;font-size:13.2px;line-height:16px;color:#111">Подробный отчет</div>
<div class="abs" style="left:191px;top:112px;width:1066px;height:1px;background:#d4d4d4"></div>

</body></html>
